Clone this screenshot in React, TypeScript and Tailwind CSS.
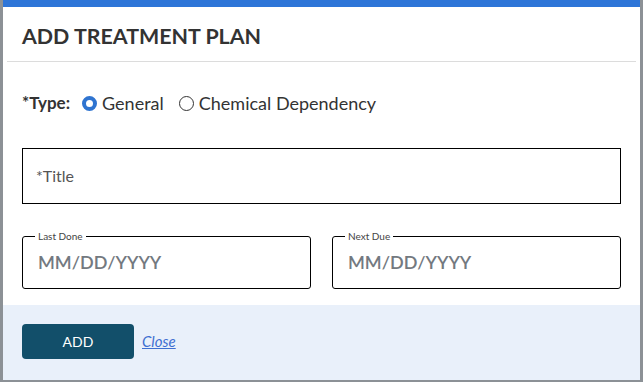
const DateField = ({ label }: { label: string }) => {
  return (
    <fieldset className="flex-1 h-[58px] border border-black rounded-[3px] px-[12px] min-w-0">
      <legend className="px-[3px] text-[10px] leading-[10px] text-[#444]">{label}</legend>
      <span className="block pl-[3px] pt-[10px] text-[18px] leading-[22px] font-semibold text-[#737980]">MM/DD/YYYY</span>
    </fieldset>
  );
};

const App = () => {
  return (
    <div className="h-[382px] w-[643px] bg-[#8c9196] pl-[3px] pr-[3px] pb-[2px] font-['Lato',sans-serif]">
      <div className="flex h-full flex-col bg-white">
        <div className="h-[7px] bg-[#2e75d8]" />
        <div className="mx-[4px] border-b border-[#dcdcdc] px-[15px] pt-[17px] pb-[13px]">
          <h2 className="text-[21.4px] font-bold leading-[24px] text-[#333]">ADD TREATMENT PLAN</h2>
        </div>
        <div className="flex-1 px-[19px]">
          <div className="mt-[29px] flex items-center text-[18px] leading-[24px] text-[#333]">
            <strong className="text-[17px] font-bold">*Type:</strong>
            <span className="ml-[12px] flex items-center gap-[5px]">
              <span className="inline-block h-[15px] w-[15px] rounded-full border-[4px] border-[#2f74d0] bg-white" />
              <span>General</span>
            </span>
            <span className="ml-[15px] flex items-center gap-[5px]">
              <span className="inline-block h-[15px] w-[15px] rounded-full border border-[#333] bg-white" />
              <span>Chemical Dependency</span>
            </span>
          </div>
          <div className="mt-[33px] flex h-[56px] items-center border border-black px-[13px] text-[16px] text-[#555]">
            *Title
          </div>
          <div className="mt-[27px] flex gap-[21px]">
            <DateField label="Last Done" />
            <DateField label="Next Due" />
          </div>
        </div>
        <div className="flex h-[75px] items-center gap-[8px] bg-[#e9f0fa] px-[19px] pb-[2px]">
          <button type="button" className="h-[35px] w-[112px] rounded-[4px] bg-[#124f6a] text-[14px] text-white">
            ADD
          </button>
          <a className="text-[15px] italic text-[#3f6fd1] underline">Close</a>
        </div>
      </div>
    </div>
  );
};

export default App;
